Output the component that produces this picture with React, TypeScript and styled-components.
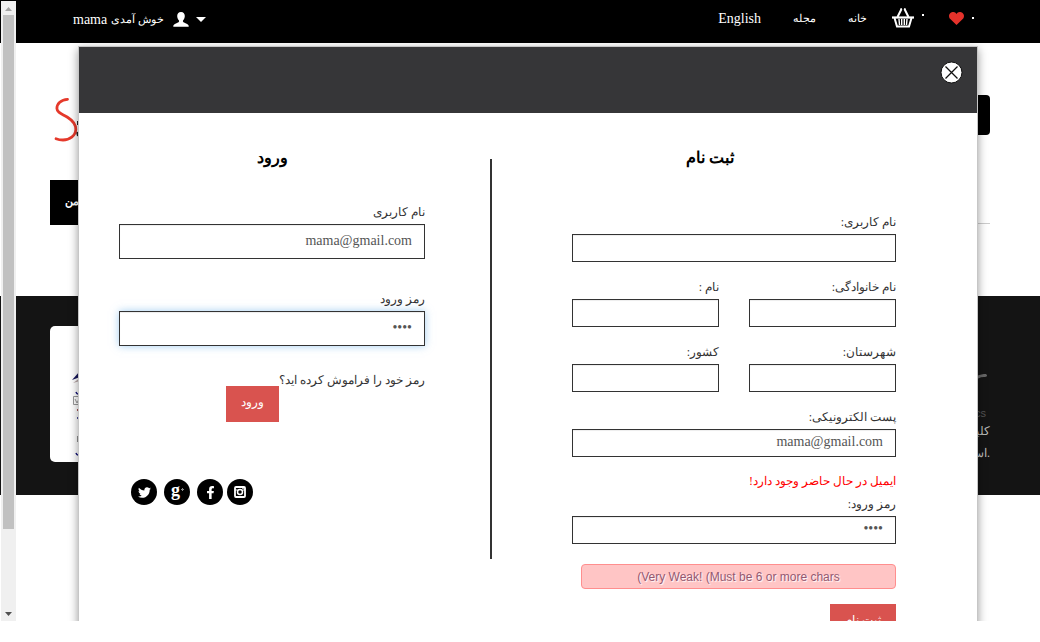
import React from "react";
import styled, { createGlobalStyle } from "styled-components";
import { FaTwitter, FaFacebookF } from "react-icons/fa";

const GlobalStyle = createGlobalStyle`
  *, *::before, *::after { box-sizing: border-box; }
  body {
    margin: 0;
    background: #fff;
    color: #333;
    font: 14px/23px "Liberation Serif", serif;
  }
  a { color: inherit; text-decoration: none; }
  button, input { font: inherit; }
`;

const Viewport = styled.div`
  position: relative;
  height: calc(100vh - 21px);
  overflow: hidden;
`;

const ScrollTrack = styled.div`
  position: absolute;
  z-index: 3;
  top: 1px;
  bottom: 0;
  left: 1px;
  width: 15px;
  display: flex;
  flex-direction: column;
  align-items: center;
  background: #f0f0f0;
`;

const ScrollArrow = styled.svg`
  display: block;
  flex: none;
  width: 15px;
  height: 14px;
`;

const ScrollSpace = styled.div`
  flex: 1;
  width: 11px;
  margin-bottom: 1px;
`;

const ScrollThumb = styled.div`
  height: 87%;
  background: #c1c1c1;
`;

const TopBar = styled.header`
  display: flex;
  justify-content: space-between;
  height: 43px;
  padding: 7px 66px 0 73px;
  background: #000;
  color: #fff;
`;

const Welcome = styled.a`
  display: flex;
  align-items: center;
  height: 24px;
  gap: 4px;
`;

const Greeting = styled.span`
  font-size: 11px;
`;

const UserIcon = styled.svg`
  width: 16px;
  height: 15px;
  margin: 0 3px 0 5px;
`;

const Caret = styled.span`
  border: 5px solid transparent;
  border-top-color: #fff;
  border-bottom: 0;
`;

const TopNav = styled.nav`
  display: flex;
  align-items: center;
  height: 22px;
  gap: 32px;
`;

const TopNavLink = styled.a<{ $small?: boolean }>`
  font-size: ${(p) => (p.$small ? 11 : 14)}px;
`;

const Counter = styled.a`
  display: flex;
  align-items: center;
  gap: 8px;
  margin-left: -7px;
`;

const CountDot = styled.span<{ $raised?: boolean }>`
  width: 2px;
  height: 2px;
  margin-bottom: ${(p) => (p.$raised ? 6 : 0)}px;
  background: #fff;
`;

const Masthead = styled.div`
  display: flex;
  justify-content: space-between;
  align-items: flex-start;
  height: 137px;
  padding: 52px 50px 0 54px;
`;

const SearchButton = styled.button`
  width: 60px;
  height: 40px;
  border: 0;
  border-radius: 4px;
  background: #000;
`;

const MenuBar = styled.nav`
  margin: 0 50px;
  height: 44px;
  border-bottom: 1px solid #ccc;
`;

const MenuItem = styled.a`
  display: block;
  width: 110px;
  height: 45px;
  padding: 10px 0 0 15px;
  background: #000;
  color: #fff;
  font-weight: bold;
  font-size: 11px;
`;

const Footer = styled.footer`
  display: flex;
  justify-content: space-between;
  margin-top: 72px;
  height: 199px;
  padding: 30px 50px 0;
  background: #141414;
`;

const TrustCard = styled.div`
  width: 140px;
  height: 136px;
  border-radius: 5px;
  background: #fff;
`;

const About = styled.div`
  display: flex;
  flex-direction: column;
  align-items: flex-end;
  padding-top: 46px;
  color: #bbb;
`;

const AboutBrand = styled.span`
  margin-top: 24px;
  padding-right: 4px;
  font: 11px/14px "Liberation Sans", sans-serif;
  color: #555;
`;

const AboutLine = styled.span`
  font-size: 12px;
  line-height: 22px;
`;

const Overlay = styled.div`
  position: absolute;
  z-index: 2;
  inset: 46px 0 0 16px;
  display: flex;
  justify-content: center;
  align-items: flex-start;
`;

const Dialog = styled.section`
  width: 88%;
  max-width: 900px;
  border: 1px solid #c6c6c6;
  background: #fff;
  box-shadow: 0 3px 9px rgba(0, 0, 0, 0.4);
`;

const DialogHeader = styled.div`
  display: flex;
  justify-content: flex-end;
  height: 66px;
  padding: 14px 14px 0;
  background: #363638;
`;

const CloseButton = styled.button`
  width: 23px;
  height: 23px;
  padding: 0;
  border: 0;
  background: none;
`;

const DialogBody = styled.div`
  display: grid;
  grid-template-columns: 306fr 147px 324fr;
  padding: 33px 81px 40px 40px;
`;

const Divider = styled.div`
  width: 2px;
  height: 400px;
  margin: 13px 0 0 65px;
  background: #333;
`;

const Form = styled.form`
  direction: rtl;
  min-width: 0;
`;

const Title = styled.h2<{ $register?: boolean }>`
  margin: 0 0 ${(p) => (p.$register ? 41 : 31)}px;
  padding-right: ${(p) => (p.$register ? 48 : 0)}px;
  font-size: 16px;
  line-height: 24px;
  text-align: center;
  color: #000;
`;

const Field = styled.div<{ $gap: number }>`
  flex: 1;
  min-width: 0;
  margin-bottom: ${(p) => p.$gap}px;
`;

const FieldRow = styled.div`
  display: flex;
  gap: 30px;
`;

const Label = styled.label`
  display: block;
  height: 23px;
  font-size: 12px;
`;

const Input = styled.input<{ $tall?: boolean; $glow?: boolean }>`
  display: block;
  width: 100%;
  height: ${(p) => (p.$tall ? 35 : 28)}px;
  padding: 0 12px 2px;
  border: 1px solid #333;
  border-radius: 0;
  outline: 0;
  background: #fff;
  color: #555;
  box-shadow: ${(p) =>
    p.$glow
      ? "inset 0 1px 1px rgba(0,0,0,.075), 0 0 8px rgba(102,175,233,.6)"
      : "inset 0 1px 1px rgba(0,0,0,.075)"};
`;

const ErrorText = styled.p`
  margin: 0;
  height: 23px;
  font-size: 12px;
  color: #f00;
`;

const Strength = styled.div`
  height: 25px;
  margin: 0 0 15px 9px;
  border: 1px solid #ff8e8e;
  border-radius: 4px;
  background: #ffc5c5;
  color: #945870;
  font: 12px/24px "Liberation Sans", sans-serif;
  text-align: center;
  text-shadow: 1px 1px 1px #fff;
  direction: ltr;
`;

const SubmitButton = styled.button`
  height: 36px;
  padding: 0 15px 4px;
  border: 0;
  background: #d9534f;
  color: #fff;
  font-size: 12px;
`;

const LoginActions = styled.div`
  display: flex;
  align-items: flex-start;
  margin-top: -6px;
  ${SubmitButton} {
    margin-top: 17px;
  }
`;

const ForgotLink = styled.a`
  font-size: 12px;
`;

const Socials = styled.div`
  display: flex;
  direction: ltr;
  gap: 4px;
  margin-top: 57px;
  padding-left: 12px;
`;

const SocialGroup = styled.div`
  display: flex;
  gap: 7px;
`;

const Social = styled.a`
  display: flex;
  align-items: center;
  justify-content: center;
  width: 26px;
  height: 26px;
  border-radius: 13px;
  background: #000;
  color: #fff;
`;

interface TextFieldProps {
  id: string;
  label: string;
  gap: number;
  type?: string;
  value?: string;
  tall?: boolean;
  glow?: boolean;
}

function TextField({ id, label, gap, type = "text", value, tall, glow }: TextFieldProps) {
  return (
    <Field $gap={gap}>
      <Label htmlFor={id}>{label}</Label>
      <Input id={id} type={type} defaultValue={value} $tall={tall} $glow={glow} />
    </Field>
  );
}

function BasketIcon() {
  return (
    <svg width="22" height="20" viewBox="0 0 22 20" fill="none" stroke="#fff">
      <path d="M5.500 9 9.500 1M16.500 9 12.500 1" strokeWidth="2" />
      <path d="M8.500 1h1.500M12 1h1.500" strokeWidth="1.500" />
      <path d="M0 9.500h22" strokeWidth="2.200" />
      <path d="M2.500 10 5 18.500h12L19.500 10" strokeWidth="2" />
      <path d="M7 11l.5 6M9.700 11v6M12.300 11v6M15 11l-.5 6" strokeWidth="1.400" />
    </svg>
  );
}

function HeartIcon() {
  return (
    <svg width="15" height="13" viewBox="0 0 15 13" fill="#e5322b">
      <path d="M7.500 13 1.300 7.100C-.6 5.200-.3 2 1.700.7 3.700-.6 6.400-.1 7.500 2 8.600-.1 11.300-.6 13.300.7c2 1.300 2.300 4.500.4 6.400z" />
    </svg>
  );
}

function Page() {
  return (
    <>
      <TopBar>
        <Welcome href="#account">
          <span>mama</span>
          <Greeting>خوش آمدی</Greeting>
          <UserIcon viewBox="0 0 16 15" fill="#fff">
            <path d="M8 0c2.600 0 3.800 1.700 3.800 4 0 1.900-.8 3.400-1.600 4.300-.5.600-.4 1.500.3 1.900l3.600 1.700c1 .5 1.600 1.100 1.600 2.300v.5H.3v-.5c0-1.200.6-1.800 1.600-2.300l3.600-1.700c.7-.4.8-1.300.3-1.900C5 7.400 4.200 5.900 4.200 4 4.200 1.700 5.400 0 8 0z" />
          </UserIcon>
          <Caret />
        </Welcome>
        <TopNav>
          <TopNavLink href="#en">English</TopNavLink>
          <TopNavLink href="#mag" $small>مجله</TopNavLink>
          <TopNavLink href="#home" $small>خانه</TopNavLink>
          <Counter href="#basket" aria-label="سبد خرید">
            <BasketIcon />
            <CountDot $raised />
          </Counter>
          <Counter href="#likes" aria-label="علاقه مندی">
            <HeartIcon />
            <CountDot />
          </Counter>
        </TopNav>
      </TopBar>
      <Masthead>
        <svg width="40" height="48" viewBox="0 0 40 48" fill="none" aria-hidden="true">
          <path d="M24 26v4M23 37l1 4" stroke="#222" strokeWidth="2" />
          <path
            d="M13.500 4.300C7 4.500 2.800 9 2.900 13.500c.2 4.500 5.600 5.500 10.600 8.700 5.500 3.500 8.500 7.800 8.300 12.300C21.500 41 15.500 45 9 45c-3 0-5.500-.7-7-1.300"
            stroke="#e5392b"
            strokeWidth="2.800"
            strokeLinecap="round"
          />
        </svg>
        <SearchButton aria-label="جستجو" />
      </Masthead>
      <MenuBar>
        <MenuItem href="#menu">انجمن</MenuItem>
      </MenuBar>
      <Footer>
        <TrustCard>
          <svg width="40" height="136" viewBox="0 0 40 136" aria-hidden="true">
            <path d="M22 54 30 45v6z" fill="#15155a" />
            <path d="M23 57 30 52v3z" fill="#b9a8a8" />
            <path d="M26 66q1 3 4 2M27 92h3M26 127q1 3 4 2" stroke="#15157a" strokeWidth="1.500" fill="none" />
            <path d="M23.500 70.500h8v8h-8zM25 73l2 4 2-4" stroke="#999" fill="none" />
            <path d="M27 84h3" stroke="#a55" strokeWidth="2" />
            <path d="M28 110v6" stroke="#222" />
          </svg>
        </TrustCard>
        <About>
          <svg width="24" height="10" viewBox="0 0 24 10" aria-hidden="true">
            <path d="M2 10C8 4 14 2 20 2c2 2 1 3-2 3-4 0-8 2-10 5z" fill="#666" />
          </svg>
          <AboutBrand>cs</AboutBrand>
          <AboutLine>کلیه</AboutLine>
          <AboutLine>است.</AboutLine>
        </About>
      </Footer>
    </>
  );
}

function LoginForm() {
  return (
    <Form>
      <Title>ورود</Title>
      <TextField id="login-user" label="نام کاربری" gap={29} value="mama@gmail.com" tall />
      <TextField id="login-pass" label="رمز ورود" gap={29} type="password" value="mama" tall glow />
      <LoginActions>
        <ForgotLink href="#forgot">رمز خود را فراموش کرده اید؟</ForgotLink>
        <SubmitButton type="button">ورود</SubmitButton>
      </LoginActions>
      <Socials>
        <SocialGroup>
          <Social href="#twitter" aria-label="Twitter">
            <FaTwitter size={13} />
          </Social>
          <Social href="#google" aria-label="Google Plus">
            <svg width="26" height="26" viewBox="0 0 26 26" fill="#fff">
              <text x="7" y="17" fontSize="18" fontWeight="bold" fontFamily="Liberation Serif">g</text>
              <path d="M17 10.500h3M18.500 9v3" stroke="#888" strokeWidth="1" />
            </svg>
          </Social>
          <Social href="#facebook" aria-label="Facebook">
            <FaFacebookF size={13} />
          </Social>
        </SocialGroup>
        <Social href="#instagram" aria-label="Instagram">
          <svg width="12" height="12" viewBox="0 0 12 12" fill="none" stroke="#fff">
            <rect x="1" y="1" width="10" height="10" rx="1" strokeWidth="1.800" />
            <circle cx="6" cy="6" r="2.500" strokeWidth="1.500" />
            <path d="M1 4h2.500M8.500 4H11M8 2.200h2" strokeWidth="1" />
          </svg>
        </Social>
      </Socials>
    </Form>
  );
}

function RegisterForm() {
  return (
    <Form>
      <Title $register>ثبت نام</Title>
      <TextField id="reg-user" label="نام کاربری:" gap={14} />
      <FieldRow>
        <TextField id="reg-family" label="نام خانوادگی:" gap={14} />
        <TextField id="reg-name" label="نام :" gap={14} />
      </FieldRow>
      <FieldRow>
        <TextField id="reg-city" label="شهرستان:" gap={14} />
        <TextField id="reg-country" label="کشور:" gap={14} />
      </FieldRow>
      <TextField id="reg-mail" label="پست الکترونیکی:" gap={13} value="mama@gmail.com" />
      <ErrorText>ایمیل در حال حاضر وجود دارد!</ErrorText>
      <TextField id="reg-pass" label="رمز ورود:" gap={20} type="password" value="mama" />
      <Strength>(Very Weak! (Must be 6 or more chars</Strength>
      <SubmitButton type="button">ثبت نام</SubmitButton>
    </Form>
  );
}

export default function App() {
  return (
    <Viewport>
      <GlobalStyle />
      <Page />
      <Overlay>
        <Dialog role="dialog" aria-label="ورود و ثبت نام">
          <DialogHeader>
            <CloseButton type="button" aria-label="بستن">
              <svg width="23" height="23" viewBox="0 0 23 23">
                <circle cx="11.500" cy="11.500" r="10.500" fill="#fff" stroke="#111" />
                <path d="m5.500 5.500 12 12m0-12-12 12" stroke="#111" strokeWidth="1.300" />
              </svg>
            </CloseButton>
          </DialogHeader>
          <DialogBody>
            <LoginForm />
            <Divider />
            <RegisterForm />
          </DialogBody>
        </Dialog>
      </Overlay>
      <ScrollTrack aria-hidden="true">
        <ScrollArrow viewBox="0 0 15 14">
          <path d="M4 10h7L7.500 6z" fill="#a3a3a3" />
        </ScrollArrow>
        <ScrollSpace>
          <ScrollThumb />
        </ScrollSpace>
        <ScrollArrow viewBox="0 0 15 14">
          <path d="M4 5h7L7.500 9z" fill="#505050" />
        </ScrollArrow>
      </ScrollTrack>
    </Viewport>
  );
}
